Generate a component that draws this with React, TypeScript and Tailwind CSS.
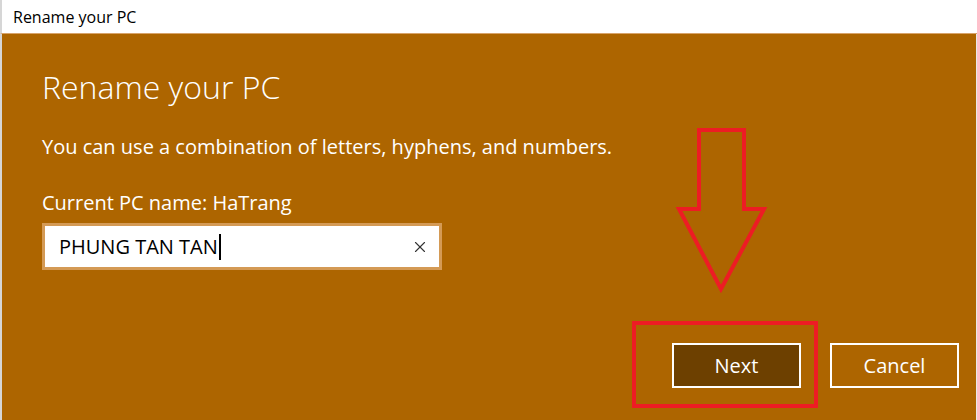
// Rename your PC dialog
import { X } from "lucide-react";

const FONT = "font-['Open_Sans','Noto_Sans',sans-serif]";

// Red annotation arrow pointing down at the Next button
function DownArrow() {
  return (
    <svg width="96" height="170" viewBox="0 0 96 170" className="absolute left-[674px] top-[126px]">
      <path
        d="M25 4 H70 V83 H90 L47 163 L5 83 H25 Z"
        fill="none"
        stroke="#ed1c24"
        strokeWidth="4"
        strokeLinejoin="miter"
      />
    </svg>
  );
}

export default function App() {
  return (
    <div className={`relative w-[977px] h-[420px] flex flex-col overflow-hidden ${FONT}`}>
      {/* Title bar */}
      <div className="h-[34px] bg-white border-l-2 border-[#d6d6d6] border-b border-b-[#d8a36a] flex items-center pl-[11px]">
        <span className="text-[16px] text-black">Rename your PC</span>
      </div>

      {/* Body */}
      <div className="flex-1 bg-[#ad6500] border-l-2 border-l-[#d6d6d6] border-r border-r-[#e8e8e8] flex flex-col pl-[40px] text-white">
        <h1 className="mt-[33px] text-[32px] font-light leading-[40px]">Rename your PC</h1>
        <p className="mt-[27px] text-[20px] leading-[26px]">
          You can use a combination of letters, hyphens, and numbers.
        </p>
        <p className="mt-[30px] text-[20px] leading-[26px]">Current PC name: HaTrang</p>

        <div className="mt-[7px] w-[400px] h-[47px] border-[3px] border-[#d49a55] bg-white flex items-center pl-[14px] pr-[10px]">
          <span className="text-[20px] text-black leading-none">PHUNG TAN TAN</span>
          <span className="w-[2px] h-[26px] bg-black ml-[1px]" />
          <X className="ml-auto text-[#333]" size={18} strokeWidth={1.5} />
        </div>

        <div className="mt-auto mb-[32px] flex justify-end gap-[29px] pr-[17px]">
          <button className="w-[129px] h-[45px] border-2 border-white bg-[#6d4000] text-[20px] text-white">
            Next
          </button>
          <button className="w-[129px] h-[45px] border-2 border-white bg-[#ad6500] text-[20px] text-white">
            Cancel
          </button>
        </div>
      </div>

      {/* Annotations */}
      <div className="absolute left-[632px] top-[321px] w-[186px] h-[87px] border-4 border-[#ed1c24]" />
      <DownArrow />
    </div>
  );
}
